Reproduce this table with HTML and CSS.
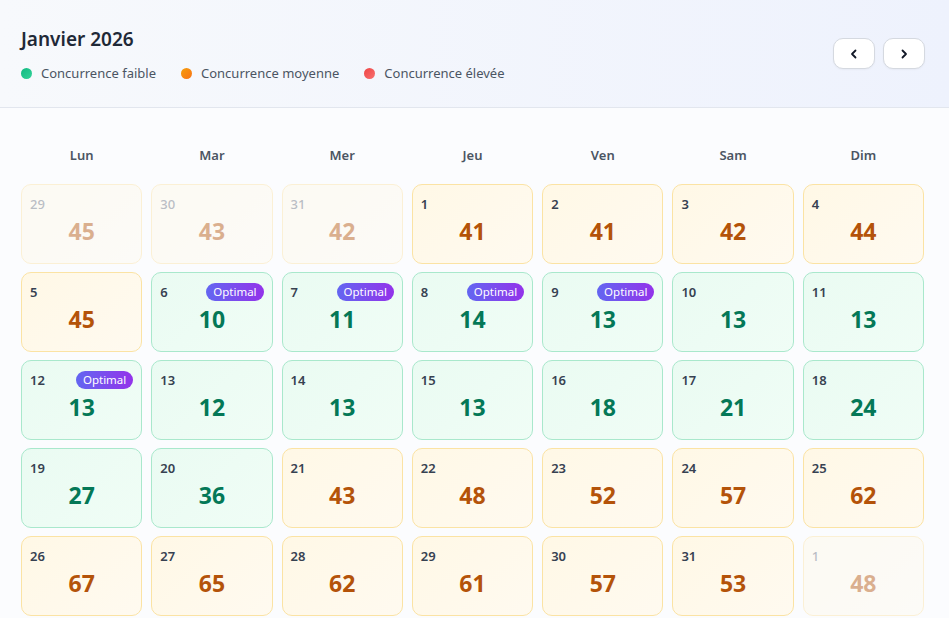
FILE: index.html
```html
<!DOCTYPE html>
<html lang="fr">
<head>
<meta charset="utf-8">
<title>Calendrier</title>
<link rel="stylesheet" href="styles.css">
</head>
<body>
<div class="card">
  <header class="head">
    <div class="head-left">
      <h1 class="title">Janvier 2026</h1>
      <div class="legend">
        <span class="leg"><span class="dot dot-low"></span>Concurrence faible</span>
        <span class="leg"><span class="dot dot-mid"></span>Concurrence moyenne</span>
        <span class="leg"><span class="dot dot-high"></span>Concurrence élevée</span>
      </div>
    </div>
    <div class="nav">
      <button class="nav-btn" aria-label="Précédent"><svg width="12" height="12" viewBox="0 0 12 12"><path d="M7.5 2.5 4 6l3.5 3.5" fill="none" stroke="#111827" stroke-width="1.8" stroke-linecap="round" stroke-linejoin="round"/></svg></button>
      <button class="nav-btn" aria-label="Suivant"><svg width="12" height="12" viewBox="0 0 12 12"><path d="M4.5 2.5 8 6l-3.5 3.5" fill="none" stroke="#111827" stroke-width="1.8" stroke-linecap="round" stroke-linejoin="round"/></svg></button>
    </div>
  </header>
  <section class="cal">
    <div class="weekdays">
      <div>Lun</div><div>Mar</div><div>Mer</div><div>Jeu</div><div>Ven</div><div>Sam</div><div>Dim</div>
    </div>
    <div class="grid">
      <div class="cell mid other"><div class="top"><span class="day">29</span></div><div class="val">45</div></div>
      <div class="cell mid other"><div class="top"><span class="day">30</span></div><div class="val">43</div></div>
      <div class="cell mid other"><div class="top"><span class="day">31</span></div><div class="val">42</div></div>
      <div class="cell mid"><div class="top"><span class="day">1</span></div><div class="val">41</div></div>
      <div class="cell mid"><div class="top"><span class="day">2</span></div><div class="val">41</div></div>
      <div class="cell mid"><div class="top"><span class="day">3</span></div><div class="val">42</div></div>
      <div class="cell mid"><div class="top"><span class="day">4</span></div><div class="val">44</div></div>

      <div class="cell mid"><div class="top"><span class="day">5</span></div><div class="val">45</div></div>
      <div class="cell low"><div class="top"><span class="day">6</span><span class="badge">Optimal</span></div><div class="val">10</div></div>
      <div class="cell low"><div class="top"><span class="day">7</span><span class="badge">Optimal</span></div><div class="val">11</div></div>
      <div class="cell low"><div class="top"><span class="day">8</span><span class="badge">Optimal</span></div><div class="val">14</div></div>
      <div class="cell low"><div class="top"><span class="day">9</span><span class="badge">Optimal</span></div><div class="val">13</div></div>
      <div class="cell low"><div class="top"><span class="day">10</span></div><div class="val">13</div></div>
      <div class="cell low"><div class="top"><span class="day">11</span></div><div class="val">13</div></div>

      <div class="cell low"><div class="top"><span class="day">12</span><span class="badge">Optimal</span></div><div class="val">13</div></div>
      <div class="cell low"><div class="top"><span class="day">13</span></div><div class="val">12</div></div>
      <div class="cell low"><div class="top"><span class="day">14</span></div><div class="val">13</div></div>
      <div class="cell low"><div class="top"><span class="day">15</span></div><div class="val">13</div></div>
      <div class="cell low"><div class="top"><span class="day">16</span></div><div class="val">18</div></div>
      <div class="cell low"><div class="top"><span class="day">17</span></div><div class="val">21</div></div>
      <div class="cell low"><div class="top"><span class="day">18</span></div><div class="val">24</div></div>

      <div class="cell low"><div class="top"><span class="day">19</span></div><div class="val">27</div></div>
      <div class="cell low"><div class="top"><span class="day">20</span></div><div class="val">36</div></div>
      <div class="cell mid"><div class="top"><span class="day">21</span></div><div class="val">43</div></div>
      <div class="cell mid"><div class="top"><span class="day">22</span></div><div class="val">48</div></div>
      <div class="cell mid"><div class="top"><span class="day">23</span></div><div class="val">52</div></div>
      <div class="cell mid"><div class="top"><span class="day">24</span></div><div class="val">57</div></div>
      <div class="cell mid"><div class="top"><span class="day">25</span></div><div class="val">62</div></div>

      <div class="cell mid"><div class="top"><span class="day">26</span></div><div class="val">67</div></div>
      <div class="cell mid"><div class="top"><span class="day">27</span></div><div class="val">65</div></div>
      <div class="cell mid"><div class="top"><span class="day">28</span></div><div class="val">62</div></div>
      <div class="cell mid"><div class="top"><span class="day">29</span></div><div class="val">61</div></div>
      <div class="cell mid"><div class="top"><span class="day">30</span></div><div class="val">57</div></div>
      <div class="cell mid"><div class="top"><span class="day">31</span></div><div class="val">53</div></div>
      <div class="cell mid other"><div class="top"><span class="day">1</span></div><div class="val">48</div></div>
    </div>
  </section>
</div>
</body>
</html>
```
FILE: styles.css
```css
* { box-sizing: border-box; }
html, body { margin: 0; padding: 0; }
body {
  font-family: "Segoe UI", "Noto Sans", "Open Sans", sans-serif;
  background: #fbfcfe;
  color: #1f2937;
}
.card { width: 949px; height: 618px; overflow: hidden; }
.head {
  height: 108px;
  display: flex;
  align-items: center;
  justify-content: space-between;
  padding: 0 24px 0 21px;
  background: linear-gradient(90deg, #f7f9fc 0%, #eef2fd 100%);
  border-bottom: 1px solid #e2e6ee;
}
.head-left { display: flex; flex-direction: column; gap: 13px; padding-top: 2px; }
.title {
  margin: 0;
  font-size: 19px;
  line-height: 24px;
  font-weight: 600;
  color: #1f2937;
}
.legend { display: flex; gap: 25px; font-size: 13px; line-height: 18px; color: #4b5563; }
.leg { display: flex; align-items: center; gap: 9px; }
.dot { width: 11px; height: 11px; border-radius: 50%; display: inline-block; }
.dot-low { background: linear-gradient(135deg, #10b981, #34d399); }
.dot-mid { background: linear-gradient(135deg, #f59e0b, #f97316); }
.dot-high { background: linear-gradient(135deg, #ef4444, #f87171); }
.nav { display: flex; gap: 8px; }
.nav-btn {
  width: 42px; height: 31px;
  border: 1px solid #d5d9e0;
  border-radius: 10px;
  background: #ffffff;
  display: flex; align-items: center; justify-content: center;
  padding: 0;
  box-shadow: 0 1px 2px rgba(0,0,0,0.04);
}
.cal { padding: 36px 25px 0 21px; }
.weekdays {
  display: grid;
  grid-template-columns: repeat(7, 1fr);
  column-gap: 9px;
  margin-bottom: 18px;
}
.weekdays div {
  text-align: center;
  font-size: 13px;
  line-height: 22px;
  font-weight: 600;
  color: #4b5563;
}
.grid {
  display: grid;
  grid-template-columns: repeat(7, 1fr);
  grid-auto-rows: 80px;
  column-gap: 9px;
  row-gap: 8px;
}
.cell {
  border-radius: 10px;
  border: 1px solid;
  padding: 10px 8px 0 8px;
  display: flex;
  flex-direction: column;
}
.cell.mid { background: linear-gradient(135deg, #fff8e6, #fffaf0); border-color: #fbe3a4; }
.cell.low { background: linear-gradient(135deg, #eafbf2, #f0fdf6); border-color: #a9e8cc; }
.cell.other { opacity: 0.45; }
.top { display: flex; justify-content: space-between; align-items: center; height: 18px; }
.day { font-size: 13px; font-weight: 600; color: #374151; line-height: 18px; }
.other .day { color: #6b7280; font-weight: 500; }
.badge {
  height: 18px;
  padding: 0 7px;
  border-radius: 9px;
  background: linear-gradient(90deg, #6366f1, #9333ea);
  color: #ffffff;
  font-size: 11.5px;
  line-height: 18px;
}
.val {
  margin-top: 4px;
  text-align: center;
  font-size: 23px;
  line-height: 28px;
  font-weight: 700;
}
.mid .val { color: #b45309; }
.low .val { color: #047857; }
```
